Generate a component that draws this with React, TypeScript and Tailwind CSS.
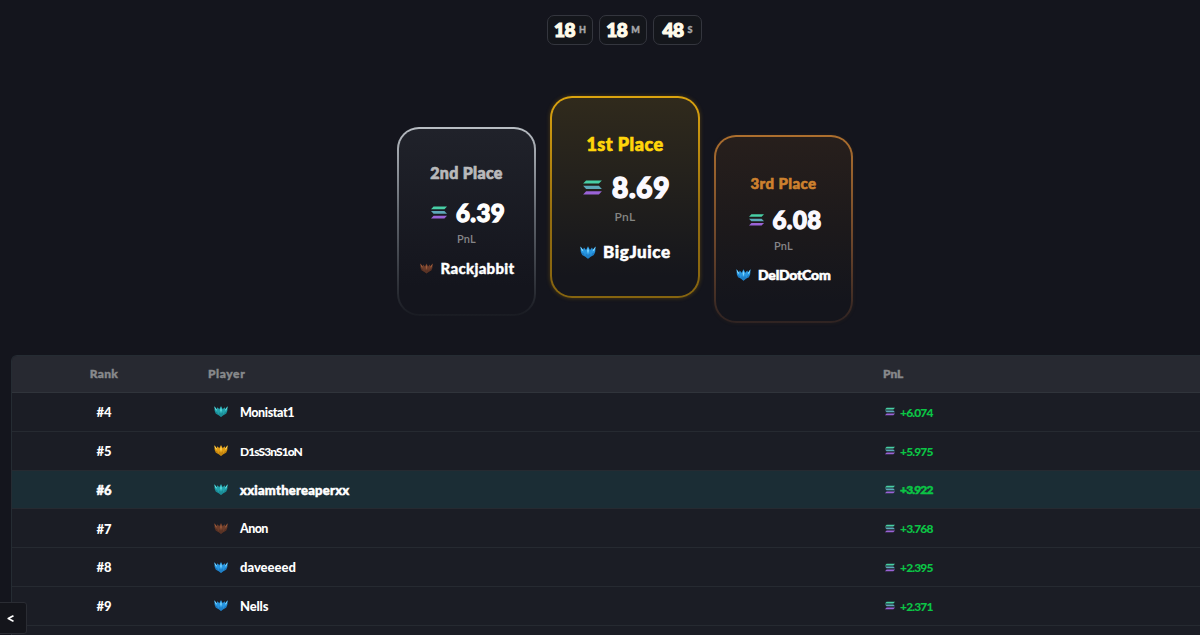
import React from 'react';
import { clsx } from 'clsx';

type Tier = 'teal' | 'gold' | 'bronze' | 'blue';

const TIERS: Record<Tier, { light: string; mid: string; dark: string }> = {
  teal: { light: '#62dfe2', mid: '#22a3ac', dark: '#12616f' },
  gold: { light: '#ffd65a', mid: '#e09c14', dark: '#8d5a08' },
  bronze: { light: '#9c5c3b', mid: '#6b3c2a', dark: '#3a211c' },
  blue: { light: '#7bd6ff', mid: '#2795e0', dark: '#12589c' },
};

const TIMER = [
  { value: '18', unit: 'H', box: 'w-[46px]' },
  { value: '18', unit: 'M', box: 'w-12' },
  { value: '48', unit: 'S', box: 'w-[49px]' },
];

const ROWS: { rank: number; name: string; pnl: string; tier: Tier; text: string; active?: boolean }[] = [
  { rank: 4, name: 'Monistat1', pnl: '6.074', tier: 'teal', text: 'text-[12.5px] tracking-[-0.4px]' },
  { rank: 5, name: 'D1sS3nS1oN', pnl: '5.975', tier: 'gold', text: 'text-[12px] tracking-[-0.95px]' },
  { rank: 6, name: 'xxiamthereaperxx', pnl: '3.922', tier: 'teal', text: 'text-[13px] tracking-[0.25px]', active: true },
  { rank: 7, name: 'Anon', pnl: '3.768', tier: 'bronze', text: 'text-[12.5px] tracking-[-0.6px]' },
  { rank: 8, name: 'daveeeed', pnl: '2.395', tier: 'blue', text: 'text-[13px] tracking-[0px]' },
  { rank: 9, name: 'Nells', pnl: '2.371', tier: 'blue', text: 'text-[13px] tracking-[-0.2px]' },
];

const Solana: React.FC<{ className?: string }> = ({ className }) => (
  <svg viewBox="0 0 20 16" className={clsx('shrink-0', className)}>
    <path d="M3.2 0.4H20l-3.2 3.4H0z" fill="#48cfa6" />
    <path d="M0 6.2h16.8L20 9.6H3.2z" fill="#5da8b9" />
    <path d="M3.2 12H20l-3.2 3.4H0z" fill="#9a63d7" />
  </svg>
);

const Badge: React.FC<{ tier: Tier; className?: string }> = ({ tier, className }) => {
  const c = TIERS[tier];
  return (
    <svg viewBox="0 0 16 13" className={clsx('shrink-0', className)}>
      <path d="M0.4 0.4 3 3.8 4 1.6 6 4 8 0.3 10 4 12 1.6 13 3.8 15.6 0.4 15.2 6 13.8 9 11 10.4 8 12.8 5 10.4 2.2 9 0.8 6z" fill={c.mid} />
      <path d="M0.8 6 4 7.6 5 10.4 2.2 9zM15.2 6 12 7.6 11 10.4 13.8 9z" fill={c.dark} fillOpacity=".4" />
      <path d="M0.4 0.4 3 3.8 3.4 5.6 1.4 4.2zM15.6 0.4 13 3.8 12.6 5.6 14.6 4.2zM8 1.5 9 4.8 8 8 7 4.8z" fill={c.light} />
      <path d="M8 9 10 7.4 11 10.4 8 12.8 5 10.4 6 7.4z" fill={c.dark} fillOpacity=".35" />
    </svg>
  );
};

function PodiumSecond() {
  return (
    <div className="mt-[31px] flex h-[189px] w-[139px] flex-col items-center rounded-[22px] border-2 border-transparent pt-[34px] [background:linear-gradient(#20222a,#14151d_85%)_padding-box,linear-gradient(#b9bec4,#62676f_45%,#191b22)_border-box]">
      <div className="text-base leading-5 font-black tracking-[0.3px] text-[#b9b9bb] [-webkit-text-stroke:0.7px]">2nd Place</div>
      <div className="mt-[18px] flex h-6 items-center gap-[9px] pl-[3px]">
        <Solana className="mb-0.5 h-[13px] w-4" />
        <span className="w-[49px] text-[24px] leading-6 font-black tracking-[0.4px] whitespace-nowrap text-white [-webkit-text-stroke:1.3px]">6.39</span>
      </div>
      <div className="mt-1.5 text-[11px] leading-4 font-semibold tracking-[0.2px] text-[#858588]">PnL</div>
      <div className="mt-[11px] flex h-5 items-center gap-2 pl-0.5">
        <Badge tier="bronze" className="h-[11px] w-[13px]" />
        <span className="w-[75px] text-[15px] leading-5 font-black tracking-[0.3px] whitespace-nowrap text-white [-webkit-text-stroke:0.35px]">Rackjabbit</span>
      </div>
    </div>
  );
}

function PodiumFirst() {
  return (
    <div className="flex h-[202px] w-[150px] flex-col items-center rounded-[22px] border-2 border-transparent pt-9 shadow-[0_0_4px_#a9780066] [background:linear-gradient(#302a1c,#211f1c_50%,#15161c_90%)_padding-box,linear-gradient(#dca40f,#936d10_60%,#85640f)_border-box]">
      <div className="text-lg leading-5 font-black tracking-[0.5px] text-[#ffd60a] [-webkit-text-stroke:0.7px]">1st Place</div>
      <div className="mt-[17px] flex h-8 items-center gap-[10px] pl-[3px]">
        <Solana className="h-[15px] w-[19px]" />
        <span className="w-[58px] text-[28px] leading-8 font-black tracking-[0.7px] whitespace-nowrap text-[#fbf9ff] [-webkit-text-stroke:1.5px]">8.69</span>
      </div>
      <div className="mt-1.5 text-xs leading-4 font-semibold tracking-[0.3px] text-[#858582]">PnL</div>
      <div className="mt-[17px] flex h-5 items-center gap-[7px] pl-px">
        <Badge tier="blue" className="h-[13px] w-4" />
        <span className="w-[68px] text-[17px] leading-5 font-black tracking-[0.6px] whitespace-nowrap text-white [-webkit-text-stroke:0.5px]">BigJuice</span>
      </div>
    </div>
  );
}

function PodiumThird() {
  return (
    <div className="mt-[39px] flex h-[188px] w-[139px] flex-col items-center rounded-[22px] border-2 border-transparent pt-9 shadow-[0_0_4px_#8a552020] [background:linear-gradient(#271f1c,#1c191b_50%,#14151c_90%)_padding-box,linear-gradient(#ad6f2e,#68432a_60%,#2f2322)_border-box]">
      <div className="text-[15px] leading-5 font-black tracking-[0.4px] text-[#cd812e] [-webkit-text-stroke:0.6px]">3rd Place</div>
      <div className="mt-[15px] flex h-6 items-center gap-[9px] pl-[3px]">
        <Solana className="h-3 w-[15px]" />
        <span className="w-[49px] text-[24px] leading-6 font-black tracking-[0.4px] whitespace-nowrap text-[#fbf9ff] [-webkit-text-stroke:1.3px]">6.08</span>
      </div>
      <div className="mt-1.5 text-[11px] leading-4 font-semibold tracking-[0.2px] text-[#858588]">PnL</div>
      <div className="mt-[11px] flex h-5 items-center gap-[7px]">
        <Badge tier="blue" className="h-3 w-[15px]" />
        <span className="w-[73px] text-sm leading-5 font-black tracking-[-0.2px] whitespace-nowrap text-white [-webkit-text-stroke:0.6px]">DelDotCom</span>
      </div>
    </div>
  );
}

export default function App() {
  return (
    <div className="relative h-[635px] w-[1200px] overflow-hidden bg-[#14151d] pt-[15px] font-[Lato,'Noto_Sans',sans-serif]">
      <div className="ml-[547px] flex h-[30px] gap-1.5">
        {TIMER.map((t) => (
          <div key={t.unit} className={clsx('flex items-center justify-center gap-1 rounded-[7px] border border-[#34363e] bg-[#14161b]', t.box)}>
            <span className="pb-px text-[19px] leading-7 font-black tracking-[-0.6px] text-[#fffbea] [-webkit-text-stroke:1.2px]">{t.value}</span>
            <span className="text-[9px] font-black text-[#a6a7aa] [-webkit-text-stroke:0.4px]">{t.unit}</span>
          </div>
        ))}
      </div>

      <div className="mt-[51px] ml-[397px] flex h-[259px] items-start gap-[14px]">
        <PodiumSecond />
        <PodiumFirst />
        <PodiumThird />
      </div>

      <div className="ml-[11px] overflow-hidden rounded-tl-[6px] border-t border-l border-[#252c33] bg-[#1b1d25]">
        <div className="flex h-[37px] items-center border-b border-[#30343b] bg-[#272931] text-xs font-black text-[#88898c] [-webkit-text-stroke:0.4px]">
          <div className="w-[184px] text-center tracking-[0.3px]">Rank</div>
          <div className="w-[687px] pl-3 tracking-[0.6px]">Player</div>
          <div>PnL</div>
        </div>
        {ROWS.map((r) => (
          <div
            key={r.rank}
            className={clsx('flex h-[38.8px] items-center border-b border-[#262a31] pt-0.5 text-[13px] text-white', r.active && 'bg-[#1b2d35] [-webkit-text-stroke:0.5px]')}
          >
            <div className="w-[184px] text-center font-black">#{r.rank}</div>
            <div className="flex w-[687px] items-center pl-[18px]">
              <Badge tier={r.tier} className="mb-0.5 h-[13px] w-[14px]" />
              <span className={clsx('ml-3 font-black whitespace-nowrap', r.text)}>{r.name}</span>
            </div>
            <div className="flex items-center gap-[5px] pl-0.5">
              <Solana className="mb-0.5 h-[9px] w-[10px]" />
              <span className="text-xs font-black tracking-[-0.85px] text-[#0bc545]">+{r.pnl}</span>
            </div>
          </div>
        ))}
        <div className="h-10" />
      </div>

      <button className="absolute top-[602px] -left-1 flex h-8 w-[31px] items-center justify-center rounded-[3px] border border-[#2a2c33] bg-[#14151b] text-white">
        <svg viewBox="0 0 8 8" className="mr-0.5 size-[7px]" fill="none" stroke="currentColor" strokeWidth="2" strokeLinecap="round" strokeLinejoin="round">
          <path d="M6.7 1.2 1.5 4l5.2 2.8" />
        </svg>
      </button>
    </div>
  );
}
